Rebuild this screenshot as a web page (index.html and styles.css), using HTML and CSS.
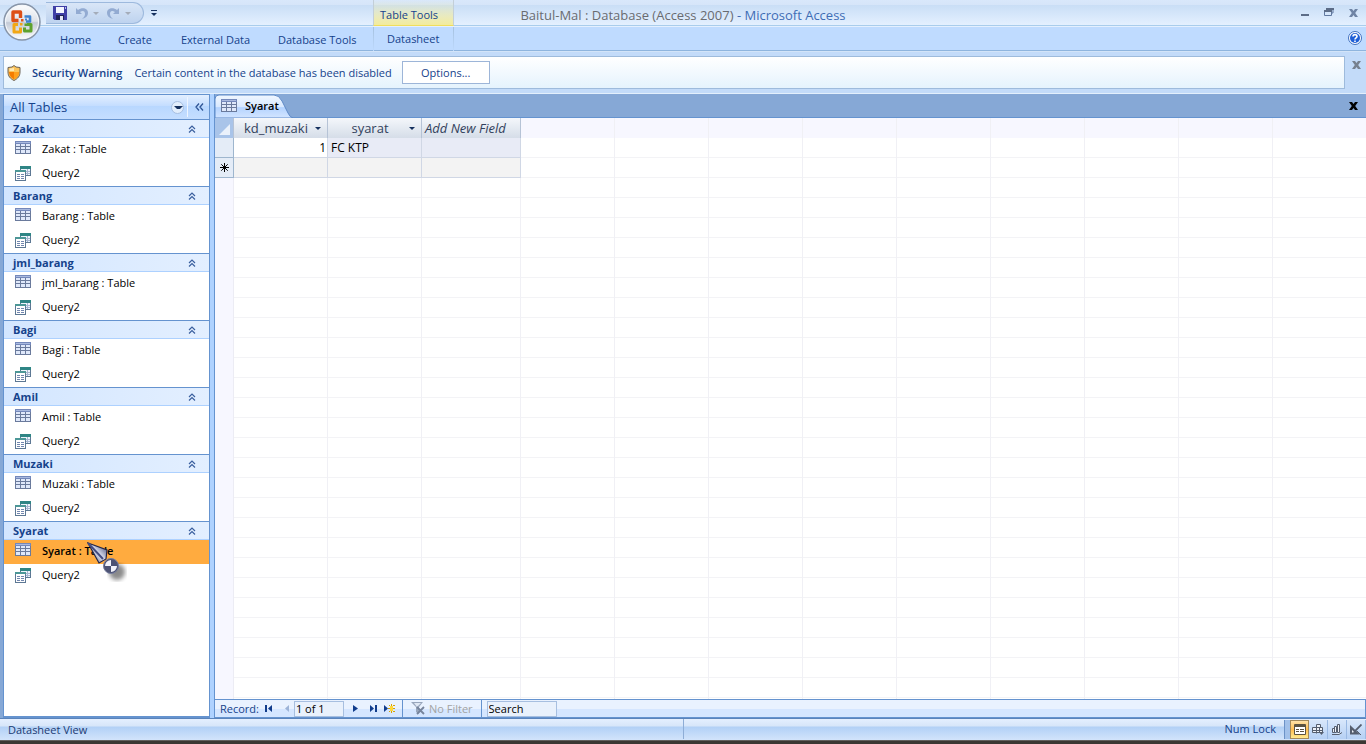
FILE: index.html
```
<!DOCTYPE html>
<html lang="en">
<head>
    <meta charset="UTF-8">
    <meta name="viewport" content="width=device-width, initial-scale=1.0">
    <title>Baitul-Mal : Database (Access 2007) - Microsoft Access</title>
    <link rel="stylesheet" href="styles.css">
</head>
<body>

<!-- shared icons -->
<svg class="sprite" aria-hidden="true">
    <symbol id="i-table" viewBox="0 0 16 13">
        <rect x="0" y="0" width="16" height="13" fill="#6a7a9c"/>
        <rect x="0" y="0" width="16" height="3" fill="#7488bb"/>
        <path d="M1 3h4v2H1zM6 3h4v2H6zM11 3h4v2h-4zM1 6h4v2H1zM6 6h4v2H6zM11 6h4v2h-4zM1 9h4v3H1zM6 9h4v3H6zM11 9h4v3h-4z" fill="#dfe8fa"/>
        <path d="M1 1h14v1H1z" fill="#a9b9de"/>
    </symbol>
    <symbol id="i-query" viewBox="0 0 16 16">
        <rect x="5" y="1" width="11" height="10" fill="#5d7894"/>
        <rect x="5" y="1" width="11" height="3" fill="#2f8585"/>
        <path d="M6 4h9v6H6z" fill="#eef4fc"/>
        <path d="M6 6h9v1H6zM6 8h9v1H6zM12 4h1v6h-1z" fill="#a5b5d0"/>
        <rect x="0" y="5" width="11" height="11" fill="#5d7894"/>
        <rect x="0" y="5" width="11" height="2" fill="#4c9797"/>
        <path d="M1 7h9v8H1z" fill="#fff"/>
        <path d="M2 9h3v1H2zM6 9h3v1H6zM2 11h3v1H2zM6 11h3v1H6zM2 13h3v1H2zM6 13h3v1H6z" fill="#7186ae"/>
    </symbol>
    <symbol id="i-up" viewBox="0 0 8 8">
        <path d="M1 4l3-3 3 3M1 7.500l3-3 3 3" fill="none" stroke="#3a5f9e" stroke-width="1.200"/>
    </symbol>
    <symbol id="i-x" viewBox="0 0 9 8">
        <path d="M0 0h3l1.500 2L6 0h3L6.200 4 9 8H6L4.500 6 3 8H0l2.800-4z" fill="currentColor"/>
    </symbol>
</svg>

<header class="titlebar">
    <button class="office-btn" aria-label="Office Button">
        <svg width="38" height="38" viewBox="0 0 38 38">
            <defs>
                <linearGradient id="orb" x1="0" y1="0" x2="0" y2="1">
                    <stop offset="0" stop-color="#fff"/>
                    <stop offset=".48" stop-color="#dde2ea"/>
                    <stop offset=".52" stop-color="#c3cad6"/>
                    <stop offset="1" stop-color="#fff"/>
                </linearGradient>
            </defs>
            <circle cx="19" cy="19" r="18" fill="url(#orb)" stroke="#8795a9" stroke-width="1.500"/>
            <circle cx="19" cy="19" r="16.500" fill="none" stroke="#f4f7fb"/>
            <g fill="none" stroke-linejoin="round">
                <path d="M17.500 15V9h-7.500v8.500h5.500" stroke="#dd4f16" stroke-width="3.400"/>
                <path d="M21.500 13.500h5.500v5h-4" stroke="#3f83d0" stroke-width="2.600"/>
                <path d="M15 21.500H11v7.500h6.500v-4.500" stroke="#f2a714" stroke-width="3"/>
                <path d="M21.500 24.500V28H28v-6.500h-4" stroke="#5ea22d" stroke-width="3"/>
            </g>
            <path d="M18 16h2.500v2.500H18z" fill="#e0571b"/>
            <path d="M22 15.500h2v2h-2z" fill="#3f83d0"/>
            <path d="M17 20h2.500v2.500H17z" fill="#f2a714"/>
            <path d="M21.500 20.500H24V23h-2.500z" fill="#5ea22d"/>
        </svg>
    </button>
    <div class="quick-access">
        <button aria-label="Save">
            <svg width="14" height="14" viewBox="0 0 14 14">
                <path d="M0 0h14v14H1.500L0 12.500z" fill="#3f3fa6"/>
                <path d="M3 1h8v6H3z" fill="#f4f6ff"/>
                <path d="M3 9h8v5H3z" fill="#1f2257"/>
                <path d="M7 10h3v4H7z" fill="#e6e9f7"/>
                <path d="M12 1h1v2h-1z" fill="#b9bdf0"/>
            </svg>
        </button>
        <button aria-label="Undo">
            <svg width="13" height="13" viewBox="0 0 13 13">
                <path d="M1 1v6h6L5 5c3-2 5-1 5 2 0 2-1 3-3 5 4-1 6-3 6-6 0-5-6-6-10-3z" fill="#93abd2"/>
            </svg>
        </button>
        <span class="drop faint"></span>
        <button aria-label="Repeat">
            <svg width="13" height="13" viewBox="0 0 13 13">
                <path d="M12 1v6H6l2-2C5 3 3 4 3 7c0 2 1 3 3 5-4-1-6-3-6-6 0-5 6-6 10-3z" fill="#93abd2"/>
            </svg>
        </button>
        <span class="drop faint"></span>
    </div>
    <button class="customize" aria-label="Customize Quick Access Toolbar"><span class="bar"></span><span class="drop"></span></button>
    <span class="context-title">Table Tools</span>
    <h1><span class="doc-name">Baitul-Mal : Database (Access 2007)</span> - Microsoft Access</h1>
    <div class="window-buttons">
        <button aria-label="Minimize"><svg width="8" height="9" viewBox="0 0 8 9"><path d="M0 6h8v2H0z" fill="#5c6c87"/></svg></button>
        <button aria-label="Restore"><svg width="10" height="9" viewBox="0 0 10 9"><path d="M2 1h7v4H7.500M0.500 3h7v4.500h-7z" fill="none" stroke="#6179a0"/><path d="M2 0h8v2H2zM0 2h8v2H0z" fill="#5c6c87"/></svg></button>
        <button aria-label="Close"><svg width="9" height="8"><use href="#i-x"/></svg></button>
    </div>
</header>

<nav class="ribbon-tabs">
    <a href="#home" class="tab-home">Home</a>
    <a href="#create" class="tab-create">Create</a>
    <a href="#external" class="tab-external">External Data</a>
    <a href="#tools" class="tab-tools">Database Tools</a>
    <a href="#datasheet" class="tab-context">Datasheet</a>
    <button class="help" aria-label="Help">
        <svg width="14" height="14" viewBox="0 0 14 14">
            <circle cx="7" cy="7" r="6.500" fill="#fff" stroke="#3f6fbe"/>
            <circle cx="7" cy="7" r="5" fill="#1f5fd6"/>
            <path d="M5 5.500C5 3 9 3 9 5.500 9 7 7 6.800 7 8.500M7 9.500v1.500" fill="none" stroke="#fff" stroke-width="1.600"/>
        </svg>
    </button>
</nav>

<section class="message-area">
    <div class="message-bar">
        <svg class="shield" width="14" height="16" viewBox="0 0 14 16">
            <path d="M7 .5L9 2l4 .5V7c0 4-2 6.500-6 8.500C3 13.500 1 11 1 7V2.500L5 2z" fill="#fbc35a" stroke="#6b6256"/>
            <path d="M2 7h10c0 3.500-2 5.500-5 7.300C4 12.500 2 10.500 2 7z" fill="#f57c00"/>
            <path d="M7 7h5c0 3.500-2 5.500-5 7.300z" fill="#ffa01c"/>
            <path d="M2.500 3.500L7 3v3H2.500z" fill="#ffe8b0"/>
        </svg>
        <strong>Security Warning</strong>
        <span>Certain content in the database has been disabled</span>
        <button class="options">Options...</button>
    </div>
    <button class="close-message" aria-label="Close message bar"><svg width="9" height="8"><use href="#i-x"/></svg></button>
</section>

<main class="workspace">
    <aside class="nav-pane">
        <div class="nav-head">
            <h2>All Tables</h2>
            <button class="nav-menu" aria-label="Choose category"><span class="drop"></span></button>
            <button class="nav-shut" aria-label="Hide pane">
                <svg width="9" height="8" viewBox="0 0 9 8"><path d="M4 0.500L1 4l3 3.500M8 0.500L5 4l3 3.500" fill="none" stroke="#2f5596" stroke-width="1.300"/></svg>
            </button>
        </div>
        <section class="group">
            <h3><button>Zakat<svg width="8" height="8"><use href="#i-up"/></svg></button></h3>
            <a href="#"><svg class="t"><use href="#i-table"/></svg>Zakat : Table</a>
            <a href="#"><svg class="q"><use href="#i-query"/></svg>Query2</a>
        </section>
        <section class="group">
            <h3><button>Barang<svg width="8" height="8"><use href="#i-up"/></svg></button></h3>
            <a href="#"><svg class="t"><use href="#i-table"/></svg>Barang : Table</a>
            <a href="#"><svg class="q"><use href="#i-query"/></svg>Query2</a>
        </section>
        <section class="group">
            <h3><button>jml_barang<svg width="8" height="8"><use href="#i-up"/></svg></button></h3>
            <a href="#"><svg class="t"><use href="#i-table"/></svg>jml_barang : Table</a>
            <a href="#"><svg class="q"><use href="#i-query"/></svg>Query2</a>
        </section>
        <section class="group">
            <h3><button>Bagi<svg width="8" height="8"><use href="#i-up"/></svg></button></h3>
            <a href="#"><svg class="t"><use href="#i-table"/></svg>Bagi : Table</a>
            <a href="#"><svg class="q"><use href="#i-query"/></svg>Query2</a>
        </section>
        <section class="group">
            <h3><button>Amil<svg width="8" height="8"><use href="#i-up"/></svg></button></h3>
            <a href="#"><svg class="t"><use href="#i-table"/></svg>Amil : Table</a>
            <a href="#"><svg class="q"><use href="#i-query"/></svg>Query2</a>
        </section>
        <section class="group">
            <h3><button>Muzaki<svg width="8" height="8"><use href="#i-up"/></svg></button></h3>
            <a href="#"><svg class="t"><use href="#i-table"/></svg>Muzaki : Table</a>
            <a href="#"><svg class="q"><use href="#i-query"/></svg>Query2</a>
        </section>
        <section class="group">
            <h3><button>Syarat<svg width="8" height="8"><use href="#i-up"/></svg></button></h3>
            <a href="#" class="selected"><svg class="t"><use href="#i-table"/></svg>Syarat : Table
                <svg class="pointer" width="44" height="44" viewBox="0 0 44 44">
                    <defs>
                        <filter id="soft"><feGaussianBlur stdDeviation="2"/></filter>
                        <linearGradient id="steel" x1="0" y1="1" x2="1" y2="0">
                            <stop offset="0" stop-color="#23284d"/>
                            <stop offset=".5" stop-color="#dfe3f5"/>
                            <stop offset="1" stop-color="#2f3561"/>
                        </linearGradient>
                    </defs>
                    <circle cx="30" cy="30" r="8" fill="#000" opacity=".45" filter="url(#soft)"/>
                    <path d="M1 1l19 7-1 9-7 4z" fill="url(#steel)" stroke="#22264a" stroke-width="1.200"/>
                    <path d="M1 1l15 16" stroke="#454c80" stroke-width="2"/>
                    <circle cx="24" cy="24" r="7.500" fill="#4d5374" stroke="#777e9e"/>
                    <path d="M24 24v-6a6 6 0 0 0-6 6zM24 24v6a6 6 0 0 0 6-6z" fill="#f2f3fa"/>
                </svg>
            </a>
            <a href="#"><svg class="q"><use href="#i-query"/></svg>Query2</a>
        </section>
    </aside>
    <div class="splitter"></div>

    <section class="document">
        <div class="doc-tabs">
            <a href="#syarat" class="doc-tab">
                <svg class="tab-shape" viewBox="0 0 78 24" preserveAspectRatio="none">
                    <defs>
                        <linearGradient id="tabfill" x1="0" y1="0" x2="0" y2="1">
                            <stop offset="0" stop-color="#f1f7ff"/>
                            <stop offset=".5" stop-color="#d9e9ff"/>
                            <stop offset=".55" stop-color="#b4d3ff"/>
                            <stop offset="1" stop-color="#d3e5ff"/>
                        </linearGradient>
                    </defs>
                    <path d="M0 24V5Q0 1 4 1H59Q64 1 67 7L73 19Q75 23.500 78 24z" fill="url(#tabfill)" stroke="#5f8bc9"/>
                </svg>
                <svg class="t"><use href="#i-table"/></svg>
                <span>Syarat</span>
            </a>
            <button aria-label="Close Syarat"><svg width="9" height="8"><use href="#i-x"/></svg></button>
        </div>

        <div class="datasheet">
            <table>
                <thead>
                    <tr>
                        <th class="corner"><svg width="11" height="11" viewBox="0 0 11 11"><path d="M11 0v11H0z" fill="#eaf1fb"/></svg></th>
                        <th class="field"><div><span>kd_muzaki</span><button class="drop" aria-label="Sort kd_muzaki"></button></div></th>
                        <th class="field"><div><span>syarat</span><button class="drop" aria-label="Sort syarat"></button></div></th>
                        <th class="add-field">Add New Field</th>
                    </tr>
                </thead>
                <tbody>
                    <tr class="current">
                        <td class="selector"></td>
                        <td class="number">1</td>
                        <td>FC KTP</td>
                        <td></td>
                    </tr>
                    <tr class="new-row">
                        <td class="selector"><svg width="9" height="9" viewBox="0 0 9 9"><path d="M4.500 0v9M0 4.500h9M1.300 1.300l6.400 6.400M7.700 1.300L1.300 7.700" stroke="#000"/></svg></td>
                        <td></td>
                        <td></td>
                        <td></td>
                    </tr>
                </tbody>
            </table>
        </div>

        <footer class="record-nav">
            <label for="record">Record:</label>
            <button aria-label="First record"><svg width="8" height="7" viewBox="0 0 8 7"><path d="M0 0h2v7H0zM7 0v7L3 3.500z" fill="#123d8c"/></svg></button>
            <button aria-label="Previous record"><svg width="4" height="7" viewBox="0 0 4 7"><path d="M4 0v7L0 3.500z" fill="#9db4d8"/></svg></button>
            <input type="text" id="record" value="1 of 1">
            <button class="next" aria-label="Next record"><svg width="5" height="7" viewBox="0 0 5 7"><path d="M0 0v7l5-3.500z" fill="#123d8c"/></svg></button>
            <button class="last" aria-label="Last record"><svg width="7" height="7" viewBox="0 0 7 7"><path d="M0 0v7l4-3.500zM5 0h2v7H5z" fill="#123d8c"/></svg></button>
            <button class="new" aria-label="New record"><svg width="11" height="9" viewBox="0 0 11 9"><path d="M0 1v7l4-3.500z" fill="#123d8c"/><path d="M5 1h1v1H5zM7 0h1v2H7zM9 1h2v1H9zM4 4h2v1H4zM9 4h2v1H9zM5 7h1v1H5zM7 7h1v2H7zM9 7h2v1H9z" fill="#d9a400"/><path d="M6 2h3v5H6z" fill="#ffd83c"/></svg></button>
            <button class="filter" disabled>
                <svg width="14" height="13" viewBox="0 0 14 13"><path d="M0 0h12L8 5v7L5 10V5z" fill="#98a6bc"/><path d="M3 1h7L6 5z" fill="#dfe7f3"/><path d="M6 5l7 7M13 5l-7 7" stroke="#76849c" stroke-width="1.800"/></svg>
                No Filter
            </button>
            <input type="text" class="search" value="Search" aria-label="Search">
        </footer>
    </section>
</main>

<footer class="status-bar">
    <span class="view-name">Datasheet View</span>
    <span class="lock">Num Lock</span>
    <div class="views">
        <button class="active" aria-label="Datasheet View"><svg width="12" height="11" viewBox="0 0 12 11"><path d="M.5.5h11v10H.5z" fill="#fff" stroke="#5c5340"/><path d="M1 1h10v2H1zM2 5h3v1H2zM2 7h3v1H2zM6 5h4v1H6zM6 7h4v1H6z" fill="#5c5340"/></svg></button>
        <button aria-label="PivotTable View"><svg width="12" height="11" viewBox="0 0 12 11"><path d="M4.500.5h4v3h-4zM.5 3.500h10v5H.5zM4.500 3.500v6M7.500 3.500v5M.5 6.500h10" fill="#eef2f8" stroke="#555e6e"/><path d="M7 8h5l-2.500 3z" fill="#555e6e"/></svg></button>
        <button aria-label="PivotChart View"><svg width="12" height="11" viewBox="0 0 12 11"><path d="M1.500 4.500h2v4h-2zM3.500 2.500h2v6h-2zM6.500.5h2v8h-2zM1 10.500h7l3-2" fill="#eef2f8" stroke="#555e6e"/></svg></button>
        <button aria-label="Design View"><svg width="12" height="11" viewBox="0 0 12 11"><path d="M0 1v9.500h10z" fill="#555e6e"/><path d="M2 6v2.500h3z" fill="#eef2f8"/><path d="M11.500.5L5 7l-1 2" fill="none" stroke="#555e6e" stroke-width="1.800"/><path d="M7 7l4 4" stroke="#555e6e"/></svg></button>
    </div>
</footer>

</body>
</html>
```
FILE: styles.css
```
* {
    box-sizing: border-box;
}

body {
    margin: 0;
    height: 100vh;
    display: flex;
    flex-direction: column;
    font-family: "Open Sans", "Noto Sans", sans-serif;
    font-size: 11px;
    color: #15428b;
    background: #bfdbff;
    overflow: hidden;
}

button, input {
    font: inherit;
    color: inherit;
    margin: 0;
    padding: 0;
    border: 0;
    background: none;
}

a {
    color: inherit;
    text-decoration: none;
}

h1, h2, h3 {
    margin: 0;
    font-size: 13px;
    font-weight: normal;
}

svg {
    display: block;
    flex: none;
}

.sprite {
    position: absolute;
    width: 0;
    height: 0;
}

.t {
    width: 16px;
    height: 13px;
}

.q {
    width: 16px;
    height: 16px;
}

.drop {
    display: block;
    border: 3px solid transparent;
    border-top-color: #15305e;
    border-bottom: 0;
}

.drop.faint {
    border-top-color: #a4acb9;
}

/* title bar */
.titlebar {
    position: relative;
    flex: none;
    height: 26px;
    display: flex;
    align-items: center;
    padding-left: 46px;
    background: linear-gradient(#d9e8fb 0, #d6e5f9 5px, #c9def6 5px, #e4f0ff 100%);
    border-bottom: 1px solid #a9cdec;
}

.office-btn {
    position: absolute;
    left: 3px;
    top: 3px;
    z-index: 2;
}

.quick-access {
    display: flex;
    align-items: center;
    gap: 8px;
    width: 98px;
    height: 22px;
    padding-left: 7px;
    margin-top: 1px;
    background: linear-gradient(#d9e6f7, #bed3ef);
    border: 1px solid #9db9dd;
    border-left: 0;
    border-radius: 0 11px 11px 0;
}

.quick-access .drop {
    margin-left: -3px;
}

.customize {
    margin: 0 auto 0 7px;
    width: 6px;
}

.customize .bar {
    display: block;
    height: 1px;
    margin-bottom: 2px;
    background: #15305e;
}

.context-title {
    position: absolute;
    left: 373px;
    top: 0;
    width: 81px;
    height: 26px;
    padding-left: 6px;
    line-height: 30px;
    background: linear-gradient(rgba(240, 232, 150, 0), #f2eb9c);
    border-bottom: 1px solid #f0de5c;
    border-right: 1px solid #c3cfd8;
    border-left: 1px solid #c3cfd8;
}

.titlebar h1 {
    position: absolute;
    left: 0;
    right: 0;
    top: 0;
    text-align: center;
    line-height: 30px;
    color: #3e6db5;
    pointer-events: none;
}

.doc-name {
    color: #696b70;
}

.window-buttons {
    display: flex;
    align-items: center;
    gap: 15px;
    padding-right: 8px;
    color: #6f84a5;
}

/* ribbon tabs */
.ribbon-tabs {
    flex: none;
    height: 26px;
    display: flex;
    align-items: center;
    padding-left: 60px;
    border-top: 1px solid #e4f0ff;
    border-bottom: 1px solid #d3e4f8;
    background: linear-gradient(#bfdbff 23px, #8fb5de 23px);
}

.tab-home {
    width: 58px;
}

.tab-create {
    width: 63px;
}

.tab-external {
    width: 97px;
}

.tab-tools {
    width: 95px;
}

.tab-context {
    width: 81px;
    line-height: 24px;
    padding-left: 13px;
    border: solid transparent;
    border-width: 0 1px;
    border-image: linear-gradient(#a3bfdd, #bfdbff) 1;
}

.help {
    margin: -2px 4px 0 auto;
}

/* security message */
.message-area {
    flex: none;
    display: flex;
    align-items: flex-start;
    padding: 4px 5px 4px 3px;
    background: #c3dbf9;
    border-bottom: 1px solid #e3effc;
}

.message-bar {
    flex: 1;
    height: 33px;
    display: flex;
    align-items: center;
    padding-left: 3px;
    background: linear-gradient(#fff, #e5f3fd);
    border: 1px solid #9ebbdc;
}

.message-bar strong {
    margin: 0 12px 0 11px;
    font-weight: 600;
}

.options {
    width: 88px;
    height: 23px;
    margin-left: 10px;
    background: #fff;
    border: 1px solid #9db5d8;
}

.close-message {
    margin: 5px 0 0 7px;
    color: #77818f;
}

/* workspace */
.workspace {
    flex: 1;
    min-height: 0;
    display: flex;
    padding-left: 3px;
    background: #86a8d6;
}

.nav-pane {
    width: 207px;
    flex: none;
    background: #fff;
    border: 1px solid #6593cf;
    border-bottom-width: 2px;
}

.nav-head {
    display: flex;
    align-items: center;
    height: 24px;
    padding-left: 6px;
    background: linear-gradient(#e3efff, #c4ddff 45%, #addaff00 46%), linear-gradient(#add1ff, #c5deff);
}

.nav-head h2 {
    flex: 1;
}

.nav-menu {
    width: 13px;
    height: 13px;
    margin-right: 3px;
    padding-left: 2px;
    border: 1px solid #a6bee0;
    border-radius: 7px;
    background: #e1edfc;
}

.nav-shut {
    height: 20px;
    padding: 0 5px 0 7px;
    border-left: 1px solid #eef5ff;
}

.group {
    border-top: 1px solid #6593cf;
}

.group h3 button {
    display: flex;
    align-items: center;
    justify-content: space-between;
    width: 100%;
    height: 18px;
    padding: 0 13px 0 9px;
    font-size: 11px;
    font-weight: bold;
    background: linear-gradient(90deg, #d3e6ff, #e3efff);
    border-bottom: 1px solid #add1ff;
}

.group a {
    position: relative;
    display: flex;
    align-items: center;
    gap: 11px;
    height: 24px;
    padding: 0 0 3px 11px;
    color: #000;
}

.group .t {
    margin-bottom: 3px;
}

.group .selected {
    background: #ffab3f;
    font-weight: 600;
}

/* mouse pointer over the selected row */
.pointer {
    position: absolute;
    left: 83px;
    top: 2px;
    z-index: 3;
}

.splitter {
    width: 5px;
    flex: none;
    background: #afd2ff;
    border-right: 1px solid #6593cf;
}

/* document */
.document {
    flex: 1;
    min-width: 0;
    display: flex;
    flex-direction: column;
}

.doc-tabs {
    flex: none;
    display: flex;
    justify-content: space-between;
    align-items: center;
    height: 24px;
    padding-right: 8px;
    border-bottom: 1px solid #6593cf;
    color: #000;
}

.doc-tab {
    position: relative;
    display: flex;
    align-items: center;
    gap: 8px;
    width: 78px;
    height: 24px;
    padding-left: 6px;
    font-weight: 600;
}

.doc-tab .t, .doc-tab span {
    position: relative;
}

.tab-shape {
    position: absolute;
    left: 0;
    top: 0;
    width: 100%;
    height: 24px;
}

/* empty grid lines behind the records */
.datasheet {
    flex: 1;
    min-height: 0;
    font-size: 13px;
    color: #000;
    background:
        linear-gradient(90deg, #f7f7ff 18px, #ececf4 18px, #ececf4 19px, transparent 19px),
        linear-gradient(90deg, #f0f0f5 1px, transparent 1px) 112px 0 / 94px 100% no-repeat,
        linear-gradient(90deg, #f0f0f5 1px, transparent 1px) 206px 0 / 94px 100% no-repeat,
        repeating-linear-gradient(90deg, #f0f0f5 0, #f0f0f5 1px, transparent 1px, transparent 94px) 305px 0 no-repeat,
        linear-gradient(#f7f7ff, #f7f7ff) 0 0 / 100% 20px no-repeat,
        repeating-linear-gradient(#fff 0, #fff 19px, #f3f3f6 19px, #f3f3f6 20px);
}

.datasheet table {
    width: 306px;
    table-layout: fixed;
    border-collapse: separate;
    border-spacing: 0;
}

.datasheet th, .datasheet td {
    height: 20px;
    padding: 0 3px;
    line-height: 19px;
    text-align: left;
    white-space: nowrap;
    border-right: 1px solid #d0d7e5;
    border-bottom: 1px solid #d0d7e5;
}

.datasheet td {
    font-size: 12px;
}

.datasheet th {
    font-weight: normal;
    color: #32415c;
    background: linear-gradient(#f4f7fb, #d5dde8);
    border-color: #b6c3d6;
    border-bottom: 0;
}

.datasheet .corner {
    width: 19px;
    padding: 2px 0 0 4px;
    background: #a9c4e9;
}

.datasheet .field {
    width: 94px;
}

.field div {
    display: flex;
    align-items: center;
}

.field span {
    flex: 1;
    text-align: center;
}

.field .drop {
    margin-right: 3px;
}

.datasheet .add-field {
    font-style: italic;
}

.datasheet .current td {
    background: #e8ebf6;
}

.datasheet .current .number {
    padding-right: 1px;
    text-align: right;
    background: #fff;
}

.datasheet .new-row td {
    background: #f3f3f3;
}

.datasheet tbody .selector {
    padding-left: 5px;
    background: #e4ecf7;
    border-color: #9eb6ce;
}

/* record navigation */
.record-nav {
    flex: none;
    display: flex;
    align-items: center;
    height: 19px;
    padding-left: 5px;
    background: linear-gradient(#e9f2ff 50%, #d5e6ff 50%);
    border: 1px solid #6593cf;
    border-left: 0;
}

.record-nav label {
    margin-right: 6px;
}

.record-nav button {
    margin-right: 12px;
}

.record-nav input {
    width: 50px;
    height: 16px;
    padding-left: 1px;
    color: #000;
    background: #e9f1fc;
    border: 1px solid #a7bfe0;
}

.record-nav [aria-label="Previous record"] {
    margin-right: 5px;
}

.record-nav .next {
    margin-left: 9px;
}

.record-nav .last, .record-nav .new {
    margin-right: 7px;
}

.record-nav .filter {
    display: flex;
    align-items: center;
    gap: 4px;
    height: 17px;
    margin-right: 5px;
    padding: 0 8px;
    color: #a3a3a3;
    border: solid #6593cf;
    border-width: 0 1px;
}

.record-nav .search {
    width: 70px;
}

/* status bar */
.status-bar {
    flex: none;
    display: flex;
    align-items: center;
    height: 26px;
    color: #15428b;
    background: linear-gradient(#5b84bb 1px, #e4efff 1px, #d7e6f9 8px, #b2d0f6 9px, #d2e4fb 22px, #8a8a8a 22px, #3b3733 23px);
    padding-bottom: 4px;
}

.view-name {
    flex: 0 0 50%;
    padding-left: 8px;
    color: #1b3b73;
}

.lock {
    flex: 1;
    text-align: right;
    padding-right: 8px;
    line-height: 20px;
    border-left: 1px solid #8eadd6;
}

.views {
    display: flex;
    padding-left: 5px;
    border-left: 1px solid #6c92c7;
    background: #a2c1ea;
}

.views button {
    width: 19px;
    height: 19px;
    padding-left: 3px;
    background: linear-gradient(#d8e7fb, #b5d0f4);
    border-right: 1px solid #9ab9e3;
}

.views .active {
    background: linear-gradient(#ffe2a8, #ffbd4f 50%, #ffe98e);
    border: 1px solid #a3895a;
}
```
